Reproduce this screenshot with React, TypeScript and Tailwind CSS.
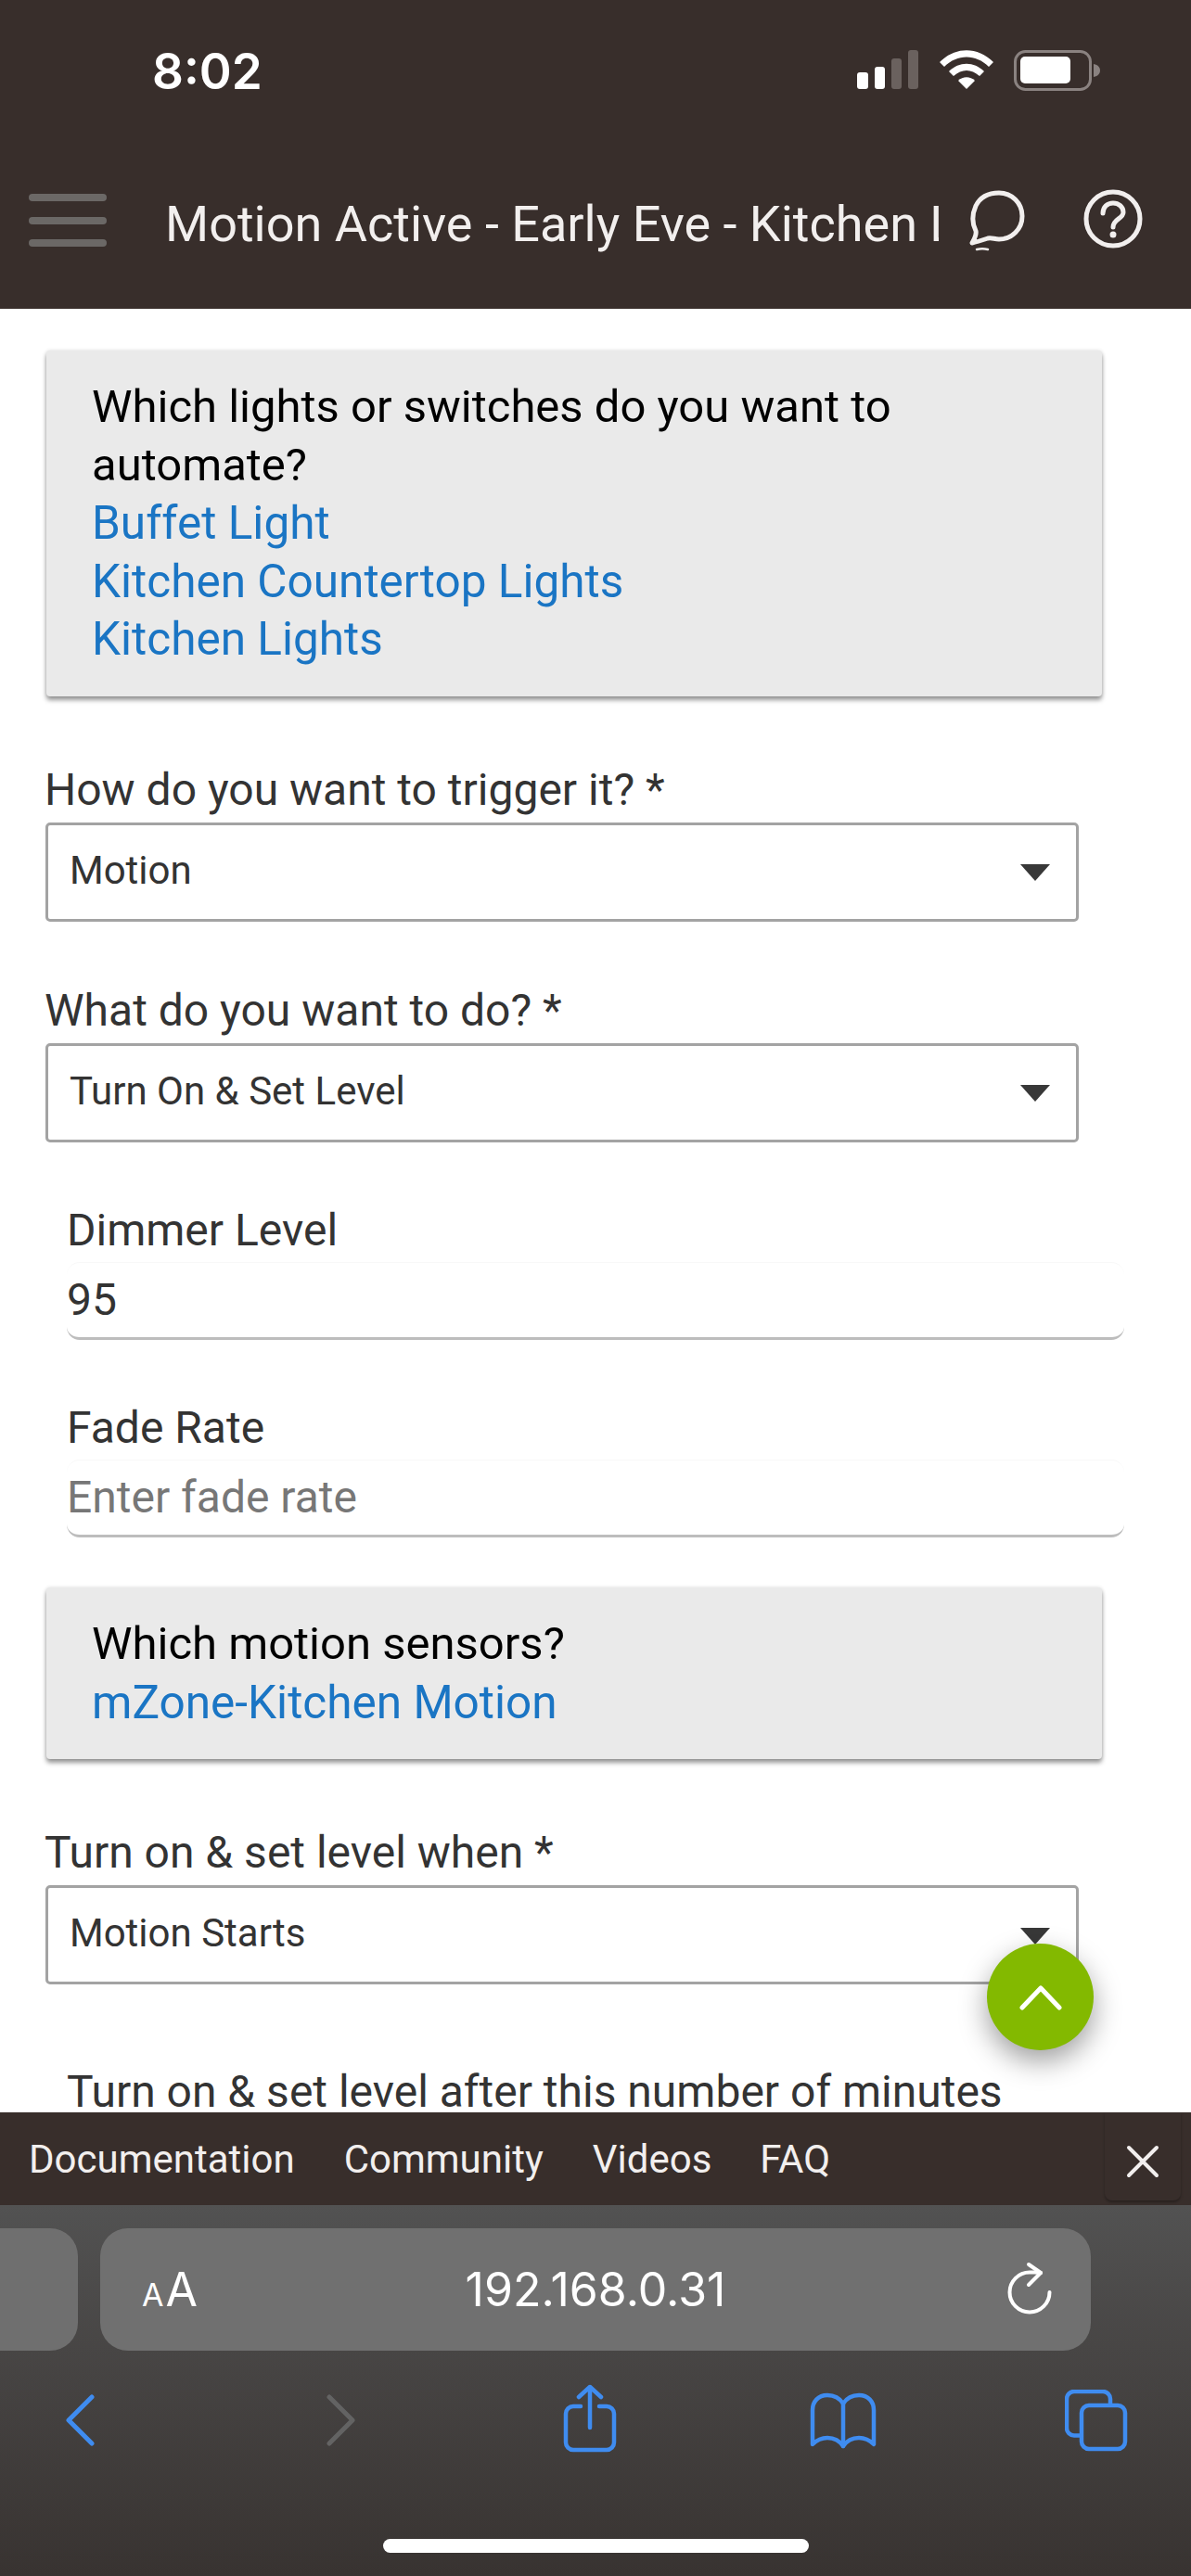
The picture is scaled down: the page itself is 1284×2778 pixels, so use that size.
const roboto = "font-['Roboto',sans-serif]";

function Card({ title, links, className }: { title: string[]; links: string[]; className: string }) {
  return (
    <div className={`ml-[50px] w-[1138px] rounded-[4px] bg-[#eaeaea] px-[49px] py-[30px] text-[49px] leading-[62.6px] shadow-[0_4px_5px_rgba(0,0,0,0.4),0_0_4px_rgba(0,0,0,0.12)] ${className}`}>
      {title.map((t) => (
        <div key={t} className="text-black">{t}</div>
      ))}
      {links.map((l) => (
        <div key={l} className="text-[49.5px] text-[#1a75c4]">{l}</div>
      ))}
    </div>
  );
}

function Select({ label, value, className }: { label: string; value: string; className: string }) {
  return (
    <div className={`ml-[49px] ${className}`}>
      <div className="-ml-[1px] h-[56px] text-[48px] leading-[56px] text-[#333333]">{label}</div>
      <div className="mt-[7px] flex h-[107px] w-[1114px] items-center justify-between rounded-[5px] border-[3px] border-[#a3a3a3] bg-white pl-[23px] pr-[27px]">
        <span className="-mt-[4px] text-[42px] text-[#333333]">{value}</span>
        <svg width="34" height="20" viewBox="0 0 34 20" className="mt-[2px]">
          <path d="M1 1 H33 L17 19 Z" fill="#383838" />
        </svg>
      </div>
    </div>
  );
}

function Field({ label, value, placeholder, className }: { label: string; value?: string; placeholder?: string; className: string }) {
  return (
    <div className={`ml-[72px] w-[1140px] ${className}`}>
      <div className="h-[56px] text-[48px] leading-[56px] text-[#333333]">{label}</div>
      <div className={`mt-[6px] flex h-[84px] items-center rounded-[14px] border-t border-t-[#f8f8f8] border-b-[3px] border-b-[#bdbdbd] text-[48px] ${value ? "text-[#333333]" : "text-[#777777]"}`}>
        {value ?? placeholder}
      </div>
    </div>
  );
}

export default function App() {
  return (
    <div className={`relative flex h-[2778px] w-[1284px] flex-col overflow-hidden bg-white ${roboto}`}>
      {/* Header */}
      <header className="h-[333px] shrink-0 bg-[#382e2b] text-[#f2efee]">
        <div className="flex h-[150px] items-start">
          <span className="ml-[164px] mt-[42px] font-['Inter',sans-serif] text-[53px] font-semibold leading-[70px] text-white">8:02</span>
          <div className="ml-auto mt-[54px] mr-[97px] flex items-start">
            <svg width="68" height="42" viewBox="0 0 68 42" className="mr-[21px]">
              <rect x="0" y="24" width="12" height="18" rx="3" fill="#fff" />
              <rect x="19" y="18" width="11" height="24" rx="3" fill="#fff" />
              <rect x="37" y="9" width="11" height="33" rx="3" fill="#6a615e" />
              <rect x="55" y="0" width="11" height="42" rx="3" fill="#6a615e" />
            </svg>
            <svg width="58" height="42" viewBox="0 0 58 42" className="mr-[22px]">
              <path d="M0 13 C17 -4 41 -4 58 13 L53 18 C39 4 19 4 5 18 Z" fill="#fff" />
              <path d="M10 23 C21 12 37 12 48 23 L43 28 C34 20 24 20 15 28 Z" fill="#fff" />
              <path d="M20 33 C25 28 33 28 38 33 L29 42 Z" fill="#fff" />
            </svg>
            <svg width="94" height="44" viewBox="0 0 94 44">
              <rect x="1.5" y="1.5" width="81" height="41" rx="11" fill="none" stroke="#8a8280" strokeWidth="3" />
              <rect x="7" y="7" width="54" height="29" rx="5" fill="#fff" />
              <path d="M86 15 C91 16 93 19 93 22 C93 25 91 28 86 29 Z" fill="#8a8280" />
            </svg>
          </div>
        </div>
        <div className="flex h-[183px] items-start">
          <button className="ml-[31px] mt-[59px] flex h-[57px] w-[84px] flex-col justify-between">
            <span className="h-[8px] w-full rounded-[4px] bg-[#6b6866]" />
            <span className="h-[8px] w-full rounded-[4px] bg-[#6b6866]" />
            <span className="h-[8px] w-full rounded-[4px] bg-[#6b6866]" />
          </button>
          <div className="ml-[63px] mt-[57px] h-[70px] w-[834px] overflow-hidden whitespace-nowrap text-[54px] leading-[70px] text-[#f2efee]">
            Motion Active - Early Eve - Kitchen Lights
          </div>
          <svg width="62" height="68" viewBox="0 0 62 68" className="ml-[33px] mt-[55px]" fill="none" stroke="#f2efee" strokeWidth="5" strokeLinejoin="round" strokeLinecap="round">
            <path d="M7 44 C3 36 3 26 7 17 C12 7 22 3 32 3 C46 3 57 14 57 28 C57 42 46 53 32 53 C27 53 24 51 20 52 C14 54 8 56 3 57 C6 52 8 48 7 44 Z" />
            <path d="M8 64 C12 63 16 63 20 64" strokeWidth="2.5" />
          </svg>
          <svg width="64" height="64" viewBox="0 0 64 64" className="ml-[61px] mt-[54px]" fill="none" stroke="#f2efee" strokeWidth="5" strokeLinecap="round">
            <circle cx="32" cy="32" r="29" />
            <path d="M21 26 C21 19 26 15 32 15 C38 15 43 19 43 25 C43 32 32 32 32 41" strokeWidth="5" />
            <circle cx="32" cy="49" r="3.5" fill="#f2efee" stroke="none" />
          </svg>
        </div>
      </header>

      {/* Form */}
      <main className="min-h-0 flex-1 overflow-hidden bg-white">
        <Card className="mt-[45px]" title={["Which lights or switches do you want to", "automate?"]} links={["Buffet Light", "Kitchen Countertop Lights", "Kitchen Lights"]} />
        <Select className="mt-[73px]" label="How do you want to trigger it? *" value="Motion" />
        <Select className="mt-[68px]" label="What do you want to do? *" value="Turn On & Set Level" />
        <Field className="mt-[67px]" label="Dimmer Level" value="95" />
        <Field className="mt-[67px]" label="Fade Rate" placeholder="Enter fade rate" />
        <Card className="mt-[54px]" title={["Which motion sensors?"]} links={["mZone-Kitchen Motion"]} />
        <Select className="mt-[73px]" label="Turn on & set level when *" value="Motion Starts" />
        <div className="ml-[72px] mt-[88px] text-[48px] leading-[56px] text-[#333333]">Turn on & set level after this number of minutes</div>
      </main>

      {/* Floating action button */}
      <button className="absolute left-[1064px] top-[2096px] flex h-[115px] w-[115px] items-center justify-center rounded-full bg-[#83b900] shadow-[0_12px_30px_rgba(0,0,0,0.38)]">
        <svg width="46" height="28" viewBox="0 0 46 28" fill="none" stroke="#fff" strokeWidth="5" strokeLinecap="round" strokeLinejoin="round">
          <path d="M3 25 L23 4 L43 25" />
        </svg>
      </button>

      {/* Site footer */}
      <nav className="relative flex h-[100px] shrink-0 items-center bg-[#382e2b] text-[42px] text-[#f2efee]">
        <span className="ml-[31px]">Documentation</span>
        <span className="ml-[53px]">Community</span>
        <span className="ml-[53px]">Videos</span>
        <span className="ml-[52px]">FAQ</span>
        <div className="absolute right-[11px] top-0 flex h-[95px] w-[82px] items-center justify-center rounded-b-[8px] pt-[10px] shadow-[0_2px_3px_rgba(0,0,0,0.3)]">
          <svg width="36" height="36" viewBox="0 0 36 36" stroke="#f2efee" strokeWidth="4" strokeLinecap="round">
            <path d="M3 3 L33 33 M33 3 L3 33" />
          </svg>
        </div>
      </nav>

      {/* Safari chrome */}
      <section className="flex h-[400px] shrink-0 flex-col bg-gradient-to-b from-[#525252] to-[#383331]">
        <div className="mt-[25px] flex h-[132px] items-stretch">
          <div className="w-[84px] rounded-r-[30px] bg-[#6f6f6f]" />
          <div className="relative ml-[24px] flex w-[1068px] items-center justify-center rounded-[30px] bg-[#707070] font-['Inter',sans-serif] text-white">
            <span className="absolute left-[45px] top-[41px] flex items-baseline font-normal leading-none">
              <span className="text-[34px]">A</span>
              <span className="ml-[2px] text-[50px]">A</span>
            </span>
            <span className="text-[50px] font-normal">192.168.0.31</span>
            <svg width="48" height="58" viewBox="0 0 48 58" fill="none" stroke="#fff" strokeWidth="4" strokeLinecap="round" strokeLinejoin="round" className="absolute right-[42px] top-[35px]">
              <path d="M36 13 C32 12 28 12.5 24 12.5 A21.5 21.5 0 1 0 45.5 34" />
              <path d="M23 4 L36 13 L23 26" />
            </svg>
          </div>
        </div>
        <div className="mt-[37px] flex h-[76px] items-start">
          <svg width="32" height="56" viewBox="0 0 32 56" fill="none" stroke="#3f8cf0" strokeWidth="5" strokeLinecap="round" strokeLinejoin="round" className="ml-[70px] mt-[10px]">
            <path d="M29 3 L4 28 L29 53" />
          </svg>
          <svg width="32" height="56" viewBox="0 0 32 56" fill="none" stroke="#636363" strokeWidth="5" strokeLinecap="round" strokeLinejoin="round" className="ml-[250px] mt-[10px]">
            <path d="M3 3 L28 28 L3 53" />
          </svg>
          <svg width="58" height="74" viewBox="0 0 58 74" fill="none" stroke="#3f8cf0" strokeWidth="4.5" strokeLinecap="round" strokeLinejoin="round" className="ml-[223px] -mt-[1px]">
            <path d="M19 24 H11 A8 8 0 0 0 3 32 V63 A8 8 0 0 0 11 71 H47 A8 8 0 0 0 55 63 V32 A8 8 0 0 0 47 24 H39" />
            <path d="M29 47 V3 M17 14 L29 3 L41 14" />
          </svg>
          <svg width="74" height="62" viewBox="0 0 74 62" fill="none" stroke="#3f8cf0" strokeWidth="4.5" strokeLinecap="round" strokeLinejoin="round" className="ml-[207px] mt-[8px]">
            <path d="M37 12 C33 6 27 3 20 3 C10 3 4 10 4 19 V56 C9 51 14 49 20 49 C27 49 33 52 37 58 C41 52 47 49 54 49 C60 49 65 51 70 56 V19 C70 10 64 3 54 3 C47 3 41 6 37 12 Z" />
            <path d="M37 12 V58" />
          </svg>
          <svg width="68" height="68" viewBox="0 0 68 68" fill="none" stroke="#3f8cf0" strokeWidth="4.5" strokeLinecap="round" strokeLinejoin="round" className="ml-[202px] mt-[5px]">
            <path d="M17 49.5 H10 A8 8 0 0 1 2 41.5 V10 A8 8 0 0 1 10 2 H41 A8 8 0 0 1 49 10 V15" />
            <rect x="18" y="17" width="47" height="47" rx="8" />
          </svg>
        </div>
        <div className="mx-auto mt-[90px] h-[15px] w-[459px] rounded-full bg-white" />
      </section>
    </div>
  );
}
